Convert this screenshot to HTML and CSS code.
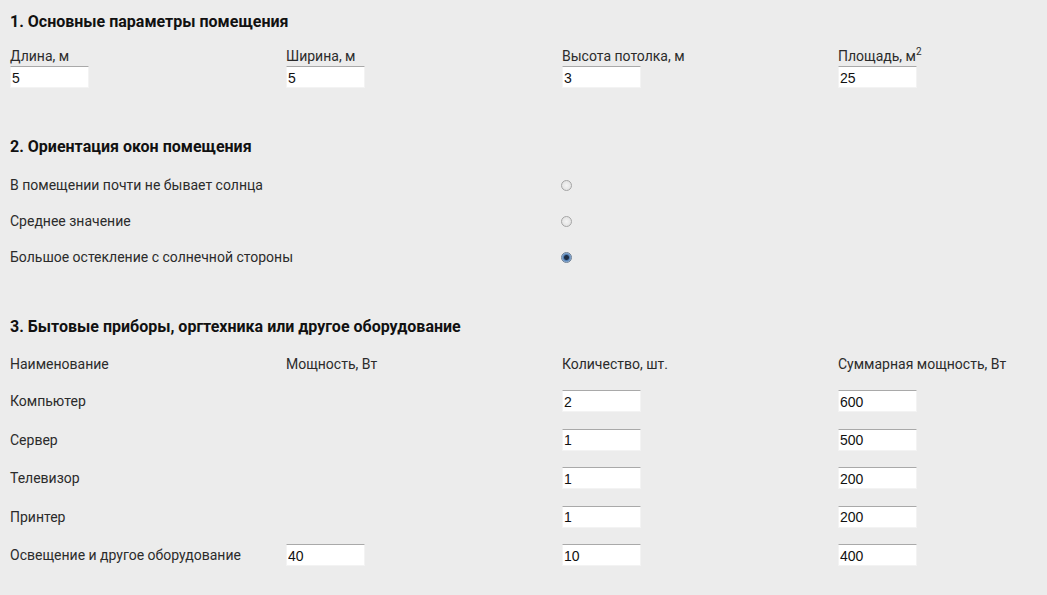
FILE: index.html
```html
<!DOCTYPE html>
<html lang="ru">
<head>
<meta charset="utf-8">
<title>Расчёт мощности кондиционера</title>
<link rel="stylesheet" href="styles.css">
</head>
<body>
<div class="calc">
  <section class="sec sec-params">
    <h2 class="sec-title">1. Основные параметры помещения</h2>
    <div class="grid4 params">
      <label class="field"><span class="lbl">Длина, м</span><input class="inp" type="text" value="5"></label>
      <label class="field"><span class="lbl">Ширина, м</span><input class="inp" type="text" value="5"></label>
      <label class="field"><span class="lbl">Высота потолка, м</span><input class="inp" type="text" value="3"></label>
      <label class="field"><span class="lbl">Площадь, м<sup>2</sup></span><input class="inp" type="text" value="25"></label>
    </div>
  </section>

  <section class="sec sec-orient">
    <h2 class="sec-title">2. Ориентация окон помещения</h2>
    <div class="radios">
      <label class="radio-row"><span class="rl">В помещении почти не бывает солнца</span><span class="rc"><input class="rad" type="radio" name="sun"></span></label>
      <label class="radio-row"><span class="rl">Среднее значение</span><span class="rc"><input class="rad" type="radio" name="sun"></span></label>
      <label class="radio-row"><span class="rl">Большое остекление с солнечной стороны</span><span class="rc"><input class="rad" type="radio" name="sun" checked></span></label>
    </div>
  </section>

  <section class="sec sec-equip">
    <h2 class="sec-title">3. Бытовые приборы, оргтехника или другое оборудование</h2>
    <div class="grid4 thead">
      <span class="th">Наименование</span>
      <span class="th">Мощность, Вт</span>
      <span class="th">Количество, шт.</span>
      <span class="th">Суммарная мощность, Вт</span>
    </div>
    <div class="grid4 tbody">
      <span class="td">Компьютер</span><span class="td"></span><span class="td"><input class="inp" type="text" value="2"></span><span class="td"><input class="inp" type="text" value="600"></span>
      <span class="td">Сервер</span><span class="td"></span><span class="td"><input class="inp" type="text" value="1"></span><span class="td"><input class="inp" type="text" value="500"></span>
      <span class="td">Телевизор</span><span class="td"></span><span class="td"><input class="inp" type="text" value="1"></span><span class="td"><input class="inp" type="text" value="200"></span>
      <span class="td">Принтер</span><span class="td"></span><span class="td"><input class="inp" type="text" value="1"></span><span class="td"><input class="inp" type="text" value="200"></span>
      <span class="td">Освещение и другое оборудование</span><span class="td"><input class="inp" type="text" value="40"></span><span class="td"><input class="inp" type="text" value="10"></span><span class="td"><input class="inp" type="text" value="400"></span>
    </div>
  </section>
</div>
</body>
</html>
```

FILE: styles.css
```css
html, body {
  margin: 0;
  padding: 0;
  background: #ececec;
}
body {
  font-family: Roboto, "Noto Sans", "Liberation Sans", sans-serif;
  font-size: 14px;
  color: #2b2b2b;
  overflow: hidden;
}
.calc {
  padding: 12px 0 0 10px;
}
.sec-title {
  margin: 0;
  font-size: 16px;
  line-height: 20px;
  font-weight: 700;
  color: #111;
}
.grid4 {
  display: grid;
  grid-template-columns: repeat(3, 276px) 1fr;
}
.params {
  margin-top: 16px;
}
.field {
  display: flex;
  flex-direction: column;
  align-items: flex-start;
}
.lbl {
  line-height: 16px;
  height: 16px;
  margin-bottom: 2px;
}
.lbl sup {
  font-size: 10px;
  line-height: 0;
  vertical-align: 6px;
}
.inp {
  box-sizing: border-box;
  width: 79px;
  height: 22px;
  margin: 0;
  padding: 1px 2px 0 1px;
  border: 1px solid #f3f3f3;
  border-top-color: #a9a9a9;
  background: #fff;
  font-family: "Liberation Sans", Arial, sans-serif;
  font-size: 14px;
  color: #111;
  outline: none;
}
.sec-orient {
  margin-top: 49px;
}
.radios {
  margin-top: 10px;
  display: flex;
  flex-direction: column;
}
.radio-row {
  display: grid;
  grid-template-columns: 551px auto;
  align-items: center;
  height: 36px;
}
.rl {
  line-height: 16px;
}
.rc {
  display: flex;
  align-items: center;
}
.rad {
  appearance: none;
  -webkit-appearance: none;
  box-sizing: border-box;
  width: 11px;
  height: 11px;
  margin: 0;
  border-radius: 50%;
  border: 1px solid #a5a5a5;
  background: radial-gradient(circle, #f4f4f4 0, #dcdcdc 100%);
}
.rad:checked {
  border-color: #6d7f94;
  background: radial-gradient(circle, #1e2d43 0, #1e2d43 2px, #4f7cb0 3px, #a9c6e8 5px);
}
.sec-equip {
  margin-top: 42px;
}
.thead {
  margin-top: 17px;
  line-height: 20px;
}
.tbody {
  margin-top: 16px;
  row-gap: 16.5px;
  align-items: center;
}
.td {
  display: flex;
  align-items: center;
  min-height: 22px;
  line-height: 16px;
}
```
